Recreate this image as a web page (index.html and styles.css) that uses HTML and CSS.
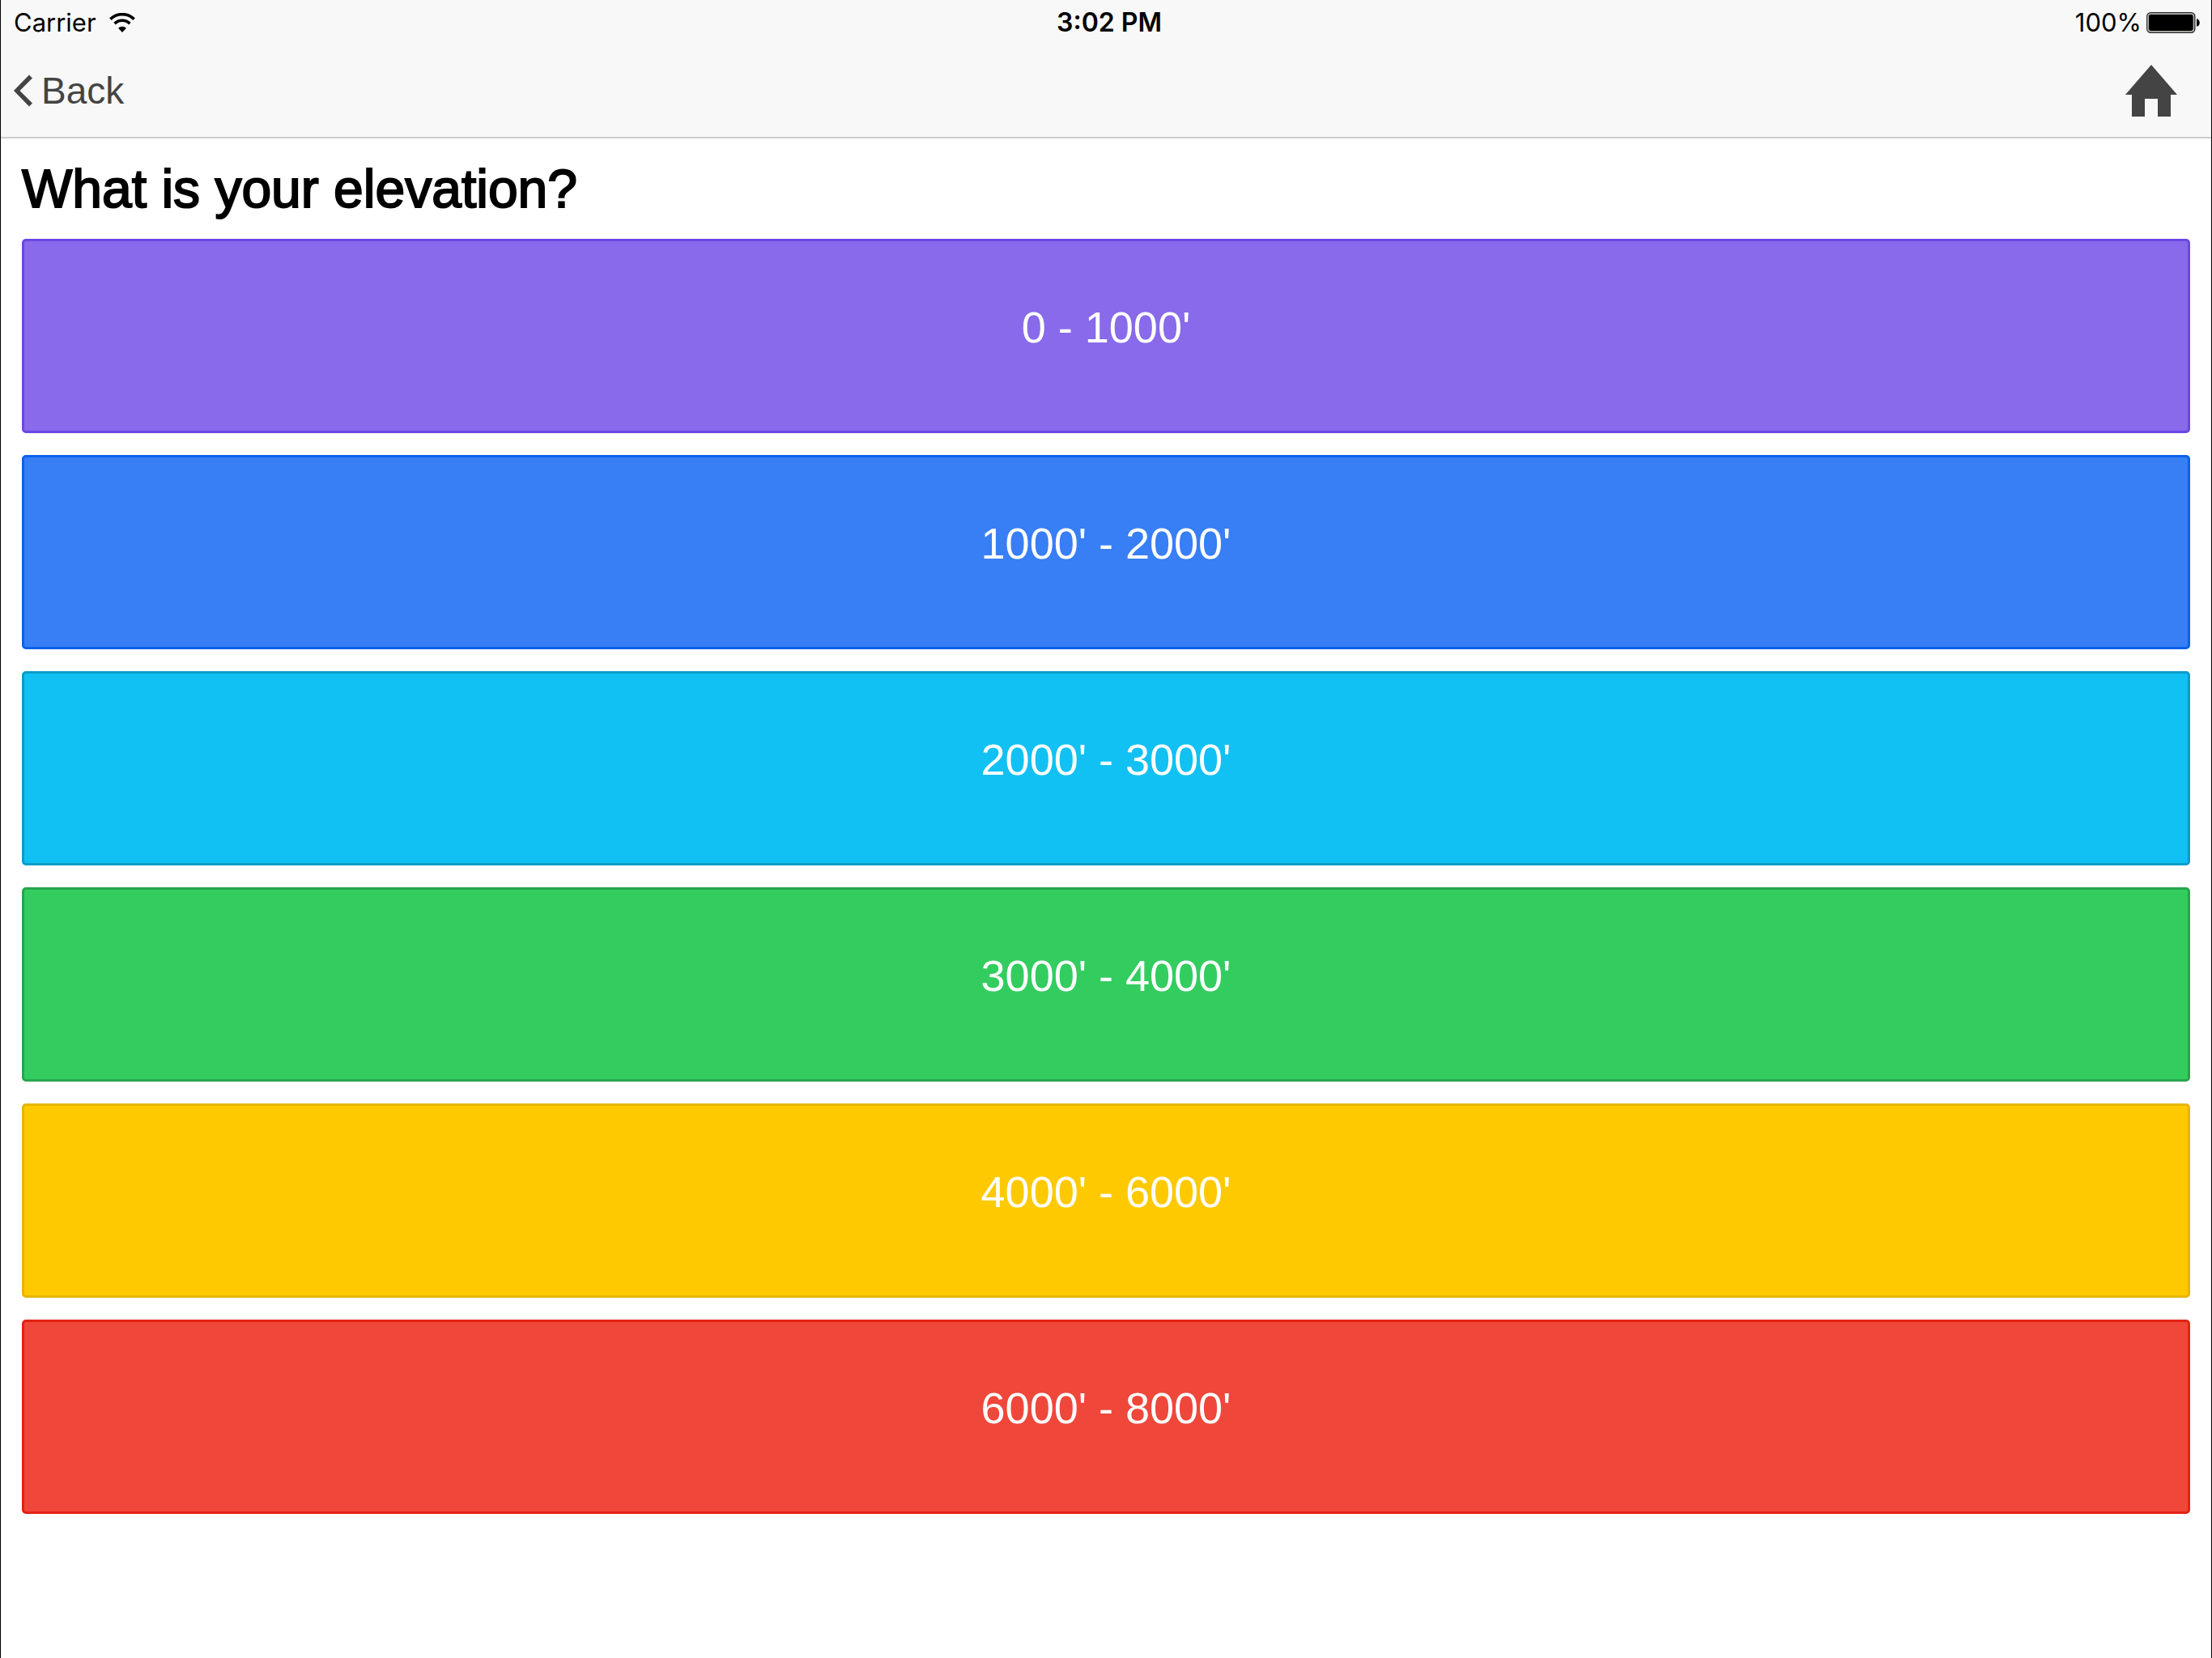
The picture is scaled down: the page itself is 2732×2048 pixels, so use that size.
FILE: index.html
```html
<!DOCTYPE html>
<html lang="en">
<head>
<meta charset="utf-8">
<meta name="viewport" content="width=device-width, initial-scale=1">
<title>Elevation</title>
<link rel="stylesheet" href="styles.css">
</head>
<body>
<div class="app">
  <header class="header">
    <div class="status">
      <div class="status-left">
        <span>Carrier</span>
        <svg class="wifi" width="32" height="24" viewBox="0 0 32 24" aria-hidden="true">
          <path d="M1.4 7.6a20.8 20.8 0 0 1 29.2 0" fill="none" stroke="#000" stroke-width="3.6"/>
          <path d="M6.6 13.1a13.4 13.4 0 0 1 18.8 0" fill="none" stroke="#000" stroke-width="3.6"/>
          <path d="M16 24l-5-5.2a7.2 7.2 0 0 1 10 0z"/>
        </svg>
      </div>
      <time class="clock">3:02 PM</time>
      <div class="status-right">
        <span>100%</span>
        <svg width="72" height="26" viewBox="0 0 72 26" aria-hidden="true">
          <rect x="0.8" y="0.8" width="59" height="24.4" rx="4.5" fill="#f8f8f8" stroke="#222" stroke-width="1.4"/>
          <rect x="2.2" y="2.2" width="56.2" height="21.6" rx="3.2" fill="#000" stroke="#a8aaa5" stroke-width="1.6"/>
          <path d="M62 8.2c5 .6 5 9 0 9.600z"/>
        </svg>
      </div>
    </div>
    <nav class="nav">
      <button class="back" type="button">
        <svg width="24" height="40" viewBox="0 0 24 40" aria-hidden="true"><path d="M0 20L19 .5l4 4L7.500 20 23 35.500l-4 4z" fill="#444"/></svg>
        <span>Back</span>
      </button>
      <button class="home" type="button" aria-label="Home">
        <svg width="64" height="64" viewBox="0 0 64 64" aria-hidden="true"><path d="M32 0L64 37H56V64H40V42H24V64H8V37H0z" fill="#444"/></svg>
      </button>
    </nav>
  </header>
  <main class="content">
    <h1 class="question">What is your elevation?</h1>
    <div class="choices">
      <button class="choice royal" type="button">0 - 1000'</button>
      <button class="choice positive" type="button">1000' - 2000'</button>
      <button class="choice calm" type="button">2000' - 3000'</button>
      <button class="choice balanced" type="button">3000' - 4000'</button>
      <button class="choice energized" type="button">4000' - 6000'</button>
      <button class="choice assertive" type="button">6000' - 8000'</button>
    </div>
  </main>
</div>
</body>
</html>
```

FILE: styles.css
```css
* {
  box-sizing: border-box;
}

body {
  margin: 0;
  background: #fff;
  font-family: "Liberation Sans", Arial, sans-serif;
}

button {
  margin: 0;
  padding: 0;
  border: 0;
  background: none;
  font: inherit;
  cursor: pointer;
}

svg {
  display: block;
}

.app {
  min-height: 100vh;
  border: solid #000;
  border-width: 0 1px;
}

.header {
  background: #f8f8f8;
  border-bottom: 2px solid #ccc;
}

.status {
  display: grid;
  grid-template-columns: 1fr auto 1fr;
  align-items: center;
  height: 55px;
  padding: 0 8px 0 16px;
  font-family: Inter, sans-serif;
  font-size: 31px;
  line-height: 56px;
}

.status-left,
.status-right {
  display: flex;
  align-items: center;
}

.status-left {
  gap: 16px;
}

.status-right {
  justify-content: flex-end;
  gap: 6px;
}

.clock {
  font-size: 32px;
  font-weight: 600;
}

.nav {
  display: flex;
  align-items: center;
  justify-content: space-between;
  height: 114px;
  padding: 0 42px 0 16px;
}

.back {
  display: flex;
  align-items: center;
  gap: 10px;
  color: #444;
  font-size: 46px;
  line-height: 54px;
}

.content {
  padding: 22px 26px;
}

.question {
  margin: 0 0 22px;
  font-size: 66px;
  font-weight: 400;
  line-height: 80px;
  -webkit-text-stroke: 2px #000;
}

.choices {
  display: flex;
  flex-direction: column;
  gap: 27px;
}

.choice {
  padding: 76px 16px 98px;
  border: 3px solid;
  border-radius: 5px;
  color: #fff;
  font-size: 54px;
  line-height: 60px;
}

.royal {
  background: #886aea;
  border-color: #6b46e5;
}

.positive {
  background: #387ef5;
  border-color: #0c60ee;
}

.calm {
  background: #11c1f3;
  border-color: #0a9dc7;
}

.balanced {
  background: #33cd5f;
  border-color: #28a54c;
}

.energized {
  background: #ffc900;
  border-color: #e6b500;
}

.assertive {
  background: #ef473a;
  border-color: #e42112;
}
```
